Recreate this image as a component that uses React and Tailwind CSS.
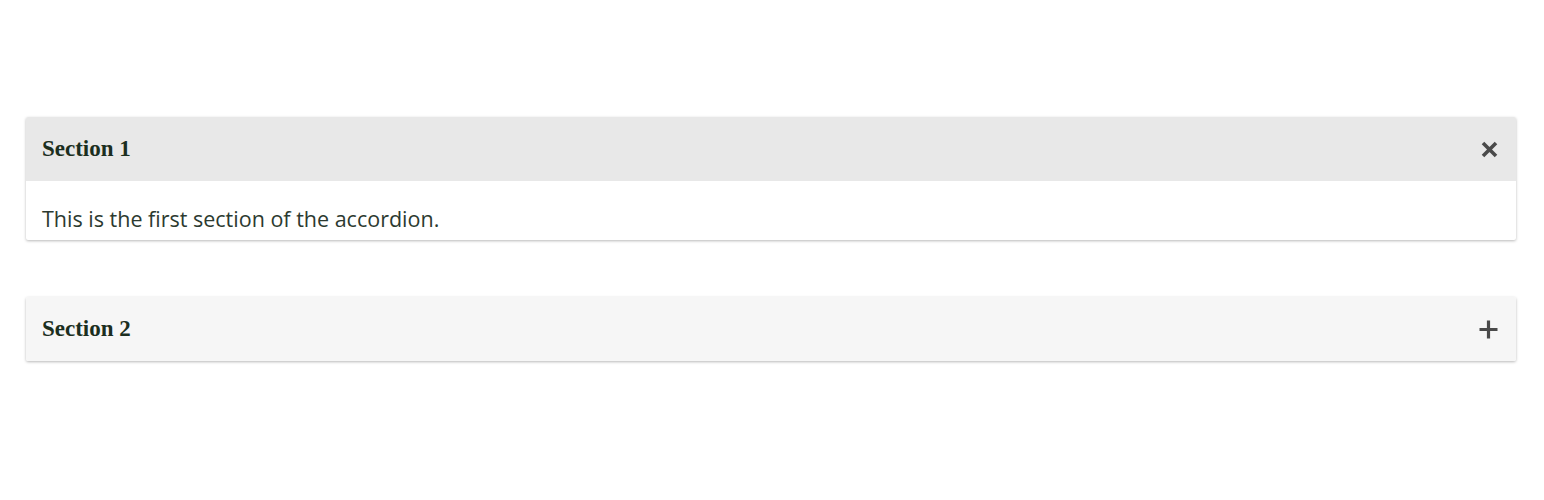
import { useState } from "react"

const SECTIONS = [
  { id: 1, title: "Section 1", body: "This is the first section of the accordion." },
  { id: 2, title: "Section 2", body: "This is the second section of the accordion." },
]

function CloseIcon() {
  return (
    <svg width="17" height="17" viewBox="0 0 17 17" className="text-[#4a4a4a]">
      <path d="M2 2 L15 15 M15 2 L2 15" stroke="currentColor" strokeWidth="3.6" />
    </svg>
  )
}

function PlusIcon() {
  return (
    <svg width="19" height="19" viewBox="0 0 19 19" className="text-[#4a4a4a]">
      <path d="M9.5 0.5 V18.5 M0.5 9.5 H18.5" stroke="currentColor" strokeWidth="3.2" />
    </svg>
  )
}

export default function App() {
  const [open, setOpen] = useState(1)

  return (
    <div className="min-h-screen bg-white pt-[117px] pl-[26px] pr-[28px]" style={{ fontFamily: "'Open Sans', sans-serif" }}>
      <div className="flex flex-col gap-[57px]">
        {SECTIONS.map((s) => {
          const isOpen = open === s.id
          return (
            <div
              key={s.id}
              className="overflow-hidden rounded-[2px] bg-white shadow-[0_1px_3px_rgba(0,0,0,0.28)]"
            >
              <button
                type="button"
                onClick={() => setOpen(isOpen ? null : s.id)}
                className={
                  "flex h-[64px] w-full items-center justify-between pl-[16px] pr-[18px] text-left " +
                  (isOpen ? "bg-[#e8e8e8]" : "bg-[#f6f6f6]")
                }
              >
                <span
                  className="text-[23px] font-bold text-[#1b2e20]"
                  style={{ fontFamily: "'Liberation Serif', serif" }}
                >
                  {s.title}
                </span>
                {isOpen ? <CloseIcon /> : <PlusIcon />}
              </button>
              {isOpen && (
                <div className="h-[59px] overflow-hidden px-[16px] pt-[23px] text-[21.5px] leading-[30px] text-[#2c3a30]">
                  {s.body}
                </div>
              )}
            </div>
          )
        })}
      </div>
    </div>
  )
}
